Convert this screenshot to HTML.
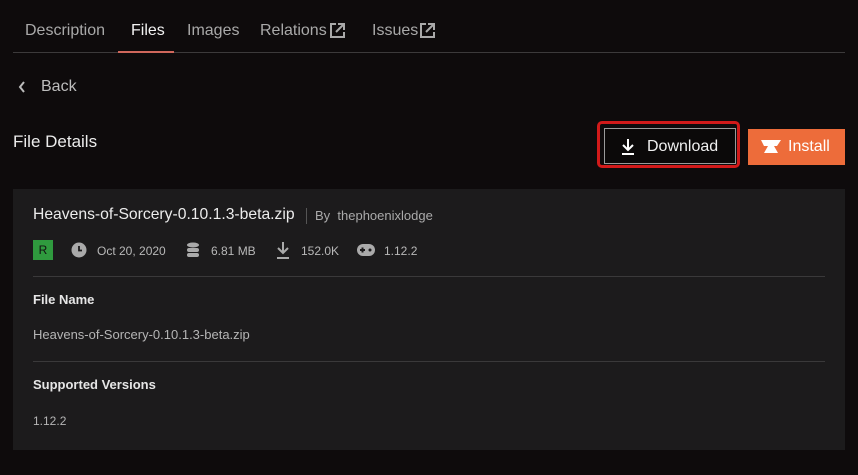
<!DOCTYPE html>
<html><head><style>
body{margin:0;width:858px;height:475px;background:#0e0b0c;font-family:"Liberation Sans",sans-serif;color:#e6e6e6;position:relative;overflow:hidden}
.a{position:absolute;white-space:nowrap}
.tab{font-size:16px;color:#a9a9a9;top:22px}
.card{position:absolute;left:13px;top:189px;width:832px;height:261px;background:#1c1b1c}
.meta{font-size:12px;color:#b8b8b8;top:244px}
.hr{position:absolute;left:33px;width:792px;height:1px;background:#3a393a}
</style></head><body>
<div class="a tab" style="left:25px">Description</div>
<div class="a tab" style="left:131px;color:#f2f2f2">Files</div>
<div class="a tab" style="left:187px">Images</div>
<div class="a tab" style="left:260px">Relations</div>
<svg class="a" style="left:329px;top:22px" width="17" height="17" viewBox="0 0 17 17" fill="none" stroke="#a9a9a9" stroke-width="2"><path d="M7 2H2v13h13v-5M9 2h6v6M15 2L7 10"/></svg>
<div class="a tab" style="left:372px">Issues</div>
<svg class="a" style="left:419px;top:22px" width="17" height="17" viewBox="0 0 17 17" fill="none" stroke="#a9a9a9" stroke-width="2"><path d="M7 2H2v13h13v-5M9 2h6v6M15 2L7 10"/></svg>
<div class="a" style="left:13px;top:52px;width:832px;height:1px;background:#3c3a3b"></div>
<div class="a" style="left:118px;top:51px;width:56px;height:2px;background:#d0675c"></div>
<svg class="a" style="left:17px;top:80px" width="10" height="14" viewBox="0 0 10 14" fill="none" stroke="#bbb" stroke-width="2"><path d="M7 2L3 7l4 5"/></svg>
<div class="a" style="left:41px;top:78px;font-size:16px;color:#bdbdbd">Back</div>
<div class="a" style="left:13px;top:132px;font-size:17px;color:#ececec">File Details</div>
<div class="a" style="left:597px;top:121px;width:143px;height:47px;border:3px solid #d11a1a;border-radius:5px;box-sizing:border-box;"></div>
<div class="a" style="left:604px;top:128px;width:132px;height:36px;border:1px solid #9a9a9a;box-sizing:border-box;background:#0b0909"></div>
<svg class="a" style="left:621px;top:138px" width="14" height="17" viewBox="0 0 14 17" fill="none" stroke="#fff" stroke-width="2"><path d="M7 1v10M2 7l5 5 5-5M1 16h12"/></svg>
<div class="a" style="left:647px;top:138px;font-size:16px;color:#f0f0f0">Download</div>
<div class="a" style="left:748px;top:129px;width:97px;height:36px;background:#ed6c3a"></div>
<svg class="a" style="left:761px;top:139px" width="20" height="16" viewBox="0 0 20 16"><path d="M0 1h20l-4 6h-3l4 7H3l4-7H3z" fill="#fff"/></svg>
<div class="a" style="left:788px;top:138px;font-size:16px;color:#fff">Install</div>
<div class="card"></div>
<div class="a" style="left:33px;top:206px;font-size:15.7px;color:#ececec">Heavens-of-Sorcery-0.10.1.3-beta.zip</div>
<div class="a" style="left:306px;top:208px;width:1px;height:16px;background:#555"></div>
<div class="a" style="left:315px;top:208px;font-size:13px;color:#aaa">By &nbsp;thephoenixlodge</div>
<div class="a" style="left:33px;top:240px;width:20px;height:20px;background:#2f9a3e;color:#111;font-size:12px;text-align:center;line-height:20px">R</div>
<svg class="a" style="left:71px;top:242px" width="16" height="16"><circle cx="8" cy="8" r="7.5" fill="#aaa"/><path d="M8 4v4.5h3" stroke="#1c1b1c" stroke-width="1.8" fill="none"/></svg>
<div class="a meta" style="left:97px">Oct 20, 2020</div>
<svg class="a" style="left:186px;top:242px" width="14" height="16" viewBox="0 0 14 16" fill="#aaa"><ellipse cx="7" cy="3" rx="6" ry="2.5"/><rect x="1" y="6" width="12" height="4" rx="2"/><rect x="1" y="11" width="12" height="4" rx="2"/></svg>
<div class="a meta" style="left:211px">6.81 MB</div>
<svg class="a" style="left:276px;top:241px" width="14" height="18" viewBox="0 0 14 18" fill="none" stroke="#aaa" stroke-width="2"><path d="M7 1v11M2 7l5 5 5-5M1 17h12"/></svg>
<div class="a meta" style="left:301px">152.0K</div>
<svg class="a" style="left:357px;top:243px" width="18" height="14" viewBox="0 0 18 14"><rect x="0" y="1" width="18" height="12" rx="6" fill="#aaa"/><rect x="3" y="6" width="5" height="2" fill="#1c1b1c"/><rect x="4.5" y="4.5" width="2" height="5" fill="#1c1b1c"/><circle cx="13" cy="7" r="1.5" fill="#1c1b1c"/></svg>
<div class="a meta" style="left:384px">1.12.2</div>
<div class="hr" style="top:276px"></div>
<div class="a" style="left:33px;top:292px;font-size:13px;font-weight:bold;color:#e6e6e6">File Name</div>
<div class="a" style="left:33px;top:327px;font-size:13px;color:#b5b5b5">Heavens-of-Sorcery-0.10.1.3-beta.zip</div>
<div class="hr" style="top:361px"></div>
<div class="a" style="left:33px;top:377px;font-size:13px;font-weight:bold;color:#e6e6e6">Supported Versions</div>
<div class="a" style="left:33px;top:414px;font-size:12px;color:#b5b5b5">1.12.2</div>
</body></html>
